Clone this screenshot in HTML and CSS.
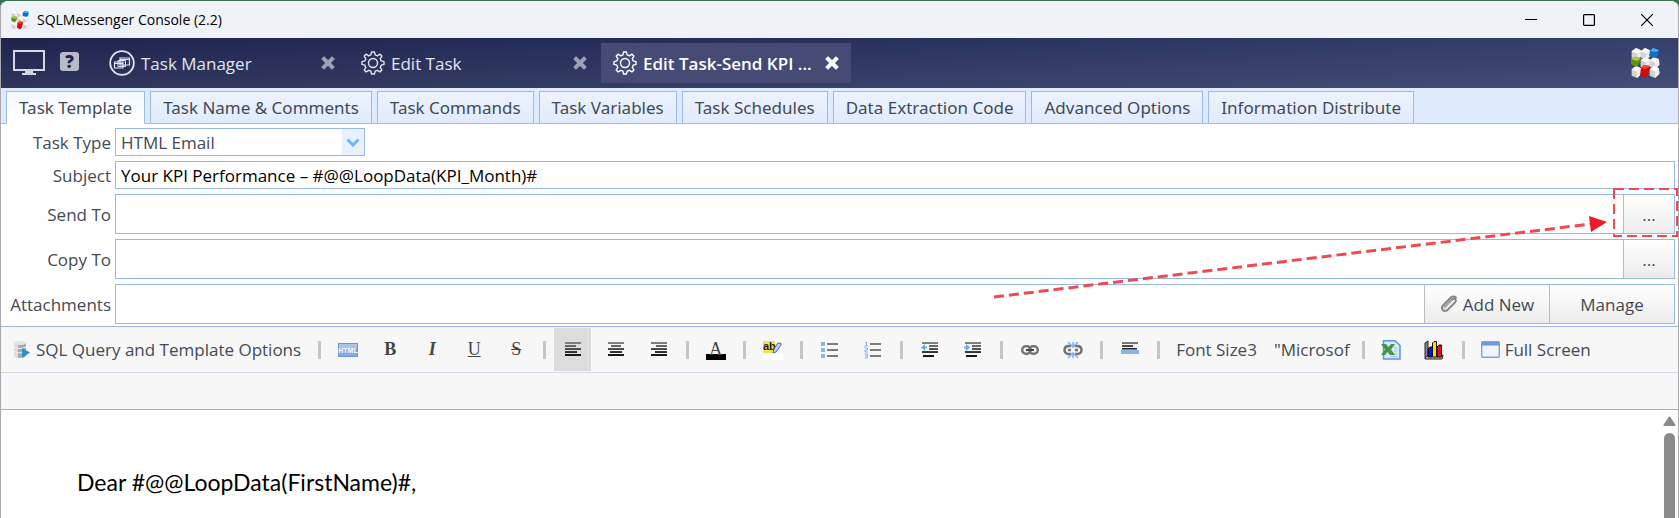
FILE: index.html
```html
<!DOCTYPE html>
<html lang="en">
<head>
    <meta charset="UTF-8">
    <meta name="viewport" content="width=device-width, initial-scale=1.0">
    <title>SQLMessenger Console (2.2)</title>
    <link rel="stylesheet" href="styles.css">
</head>
<body>

<!-- shared shapes -->
<svg class="defs" aria-hidden="true">
    <symbol id="cube-white" viewBox="0 0 10 11">
        <path d="M1 3 L5 0 L9.5 2 L10 7 L6 11 L1 9Z" fill="#d2d2d2"/>
        <path d="M1 3 L5 0 L9.5 2 L6 5Z" fill="#fff"/>
        <path d="M6 5 L9.5 2 L10 7 L6 11Z" fill="#efefef"/>
    </symbol>
    <symbol id="logo" viewBox="0 0 30 32">
        <use href="#cube-white" x="0" y="1" width="12" height="12"/>
        <use href="#cube-white" x="9" y="1" width="12" height="12"/>
        <use href="#cube-white" x="9" y="10" width="12" height="12"/>
        <use href="#cube-white" x="18" y="10" width="12" height="12"/>
        <use href="#cube-white" x="0" y="19" width="12" height="12"/>
        <use href="#cube-white" x="18" y="19" width="12" height="12"/>
        <path d="M20 4 L23 1 L29 3 L28 9 L25 11 L19 9Z" fill="#0d72c4"/>
        <path d="M20 4 L23 1 L29 3 L26 5Z" fill="#45adf5"/>
        <path d="M1 12 L5 10 L11 11 L9 17 L6 20 L1 17Z" fill="#649312"/>
        <path d="M1 12 L5 10 L11 11 L7 14Z" fill="#a5d036"/>
        <path d="M11 21 L14 18 L20 19 L18 28 L15 31 L10 28Z" fill="#d30a0a"/>
        <path d="M11 21 L14 18 L20 19 L16 22Z" fill="#ff3b33"/>
    </symbol>
    <symbol id="gear" viewBox="0 0 24 24">
        <path d="M10.6 1 H13.4 L14.2 3.9 L16.4 4.8 L19 3.2 L20.9 5.1 L19.3 7.7 L20.2 9.9 L23 10.6 V13.4 L20.2 14.2 L19.3 16.4 L20.9 19 L19 20.9 L16.4 19.3 L14.2 20.2 L13.4 23 H10.6 L9.9 20.2 L7.7 19.3 L5.1 20.9 L3.2 19 L4.8 16.4 L3.9 14.2 L1 13.4 V10.6 L3.9 9.9 L4.8 7.7 L3.2 5.1 L5.1 3.2 L7.7 4.8 L9.9 3.9Z" fill="none" stroke="currentColor" stroke-width="1.4" stroke-linejoin="round"/>
        <circle cx="12" cy="12" r="4.5" fill="none" stroke="currentColor" stroke-width="1.4"/>
    </symbol>
    <symbol id="cross" viewBox="0 0 14 14">
        <path d="M3 3 L11 11 M11 3 L3 11" stroke="currentColor" stroke-width="4" stroke-linecap="square"/>
    </symbol>
    <symbol id="chain" viewBox="0 0 18 10">
        <rect x="1.2" y="1.2" width="8.5" height="7.6" rx="3.6" fill="none" stroke="#747474" stroke-width="2.4"/>
        <rect x="8.3" y="1.2" width="8.5" height="7.6" rx="3.6" fill="none" stroke="#747474" stroke-width="2.4"/>
        <path d="M5 5 H13" stroke="#444" stroke-width="2"/>
    </symbol>
    <linearGradient id="line-shade" x1="0" y1="0" x2="0" y2="1">
        <stop offset="0" stop-color="#888"/>
        <stop offset="1" stop-color="#111"/>
    </linearGradient>
</svg>

<div class="window">
    <header class="titlebar">
        <svg class="app-icon" width="20" height="20"><use href="#logo"/></svg>
        <h1>SQLMessenger Console (2.2)</h1>
        <div class="window-buttons">
            <button aria-label="Minimize"><svg width="12" height="12"><path d="M0 5.5 H12" stroke="#000"/></svg></button>
            <button aria-label="Maximize"><svg width="12" height="12"><rect x=".6" y=".6" width="10.8" height="10.8" rx="1" fill="none" stroke="#000" stroke-width="1.2"/></svg></button>
            <button aria-label="Close"><svg width="12" height="12"><path d="M0 0 L12 12 M12 0 L0 12" stroke="#000" stroke-width="1.2"/></svg></button>
        </div>
    </header>

    <nav class="task-bar">
        <button class="nav-icon" aria-label="Desktop">
            <svg width="32" height="26" viewBox="0 0 32 26">
                <rect x="1" y="1" width="30" height="19" fill="none" stroke="#d5d7e2" stroke-width="2"/>
                <path d="M12 20 H20 V23 H23 V25 H9 V23 H12Z" fill="#d5d7e2"/>
            </svg>
        </button>
        <button class="nav-icon help" aria-label="Help">?</button>
        <div class="tasks">
            <div class="task">
                <button class="task-open">
                    <svg width="26" height="26" viewBox="0 0 26 26" fill="none" stroke="currentColor">
                        <circle cx="13" cy="13" r="11.8" stroke-width="1.8"/>
                        <path d="M11 8 H20.5 V15 H11Z M11 9.5 H20.5" stroke-width="1.2"/>
                        <path d="M9 10.500 H16.500 V16.500 H9Z" stroke-width="1"/>
                        <path d="M5.5 12 H14 V18 H5.5Z M5.5 13.5 H14" stroke-width="1.2"/>
                    </svg>
                    Task Manager
                </button>
                <button class="task-close" aria-label="Close Task Manager"><svg width="14" height="14"><use href="#cross"/></svg></button>
            </div>
            <div class="task">
                <button class="task-open"><svg width="24" height="24"><use href="#gear"/></svg>Edit Task</button>
                <button class="task-close" aria-label="Close Edit Task"><svg width="14" height="14"><use href="#cross"/></svg></button>
            </div>
            <div class="task active">
                <button class="task-open"><svg width="24" height="24"><use href="#gear"/></svg>Edit Task-Send KPI ...</button>
                <button class="task-close" aria-label="Close Edit Task-Send KPI"><svg width="14" height="14"><use href="#cross"/></svg></button>
            </div>
        </div>
        <svg class="brand" width="30" height="32"><use href="#logo"/></svg>
    </nav>

    <div class="tabs" role="tablist">
        <button role="tab" aria-selected="true">Task Template</button>
        <button role="tab">Task Name &amp; Comments</button>
        <button role="tab">Task Commands</button>
        <button role="tab">Task Variables</button>
        <button role="tab">Task Schedules</button>
        <button role="tab">Data Extraction Code</button>
        <button role="tab">Advanced Options</button>
        <button role="tab">Information Distribute</button>
    </div>

    <form class="mail-form">
        <div class="row">
            <label for="task-type">Task Type</label>
            <div class="select-box">
                <select id="task-type"><option>HTML Email</option></select>
                <span class="select-arrow"><svg width="14" height="9"><path d="M1.5 1.5 L7 7 L12.5 1.5" fill="none" stroke="#6cb8f5" stroke-width="3"/></svg></span>
            </div>
        </div>
        <div class="row">
            <label for="subject">Subject</label>
            <div class="field"><input id="subject" type="text" value="Your KPI Performance – #@@LoopData(KPI_Month)#"></div>
        </div>
        <div class="row tall">
            <label for="send-to">Send To</label>
            <div class="field">
                <input id="send-to" type="text">
                <button type="button" class="more" aria-label="Choose recipients">...</button>
            </div>
            <svg class="callout" width="690" height="120" viewBox="0 0 690 120">
                <path d="M5 112 L602 39" fill="none" stroke="#ee4a50" stroke-width="3" stroke-dasharray="10 5"/>
                <path d="M600 31 L618 37 L602 47Z" fill="#ed1c24"/>
                <rect x="625" y="4" width="63" height="47" fill="none" stroke="#ee4a50" stroke-width="2" stroke-dasharray="10 5"/>
            </svg>
        </div>
        <div class="row tall">
            <label for="copy-to">Copy To</label>
            <div class="field">
                <input id="copy-to" type="text">
                <button type="button" class="more" aria-label="Choose copy recipients">...</button>
            </div>
        </div>
        <div class="row tall">
            <label for="attachments">Attachments</label>
            <div class="field">
                <input id="attachments" type="text">
                <button type="button" class="wide">
                    <svg width="18" height="18" viewBox="0 0 18 18" fill="none" stroke-linecap="round">
                        <path d="M5 12 L12 4.5 Q14 3 15.3 4.3 Q16.5 6 15 7.5 L7.5 15 Q5 17 2.8 15 Q1 12.7 3 10.5 L10.5 2.8 Q13.5 .5 16 2.5" stroke="#858585" stroke-width="2"/>
                        <path d="M4.5 13 L12 5.5" stroke="#bbb" stroke-width="1.5"/>
                    </svg>
                    Add New
                </button>
                <button type="button" class="wide">Manage</button>
            </div>
        </div>
    </form>

    <div class="toolbar" role="toolbar">
        <button class="text-tool">
            <svg width="18" height="20" viewBox="0 0 18 20">
                <path d="M1 3 V16 Q7 20 13 16 V3Z" fill="#a9a9ad"/>
                <path d="M1 3 V16 Q3 18 5 18 V4Z" fill="#dcdcdf"/>
                <ellipse cx="7" cy="3" rx="6" ry="2.2" fill="#e4e4e6"/>
                <path d="M1 7 Q7 10 13 7 M1 11.5 Q7 14 13 11.5" fill="none" stroke="#eee" stroke-width="1.2"/>
                <path d="M9 8 L17 12.5 L9 18Z" fill="#2795c9"/>
            </svg>
            SQL Query and Template Options
        </button>
        <span class="sep"></span>
        <button aria-label="HTML source">
            <svg width="20" height="14" viewBox="0 0 20 14">
                <rect x=".5" y=".5" width="19" height="13" fill="#86a9e4" stroke="#6d93d8"/>
                <rect x="1" y="1" width="18" height="5" fill="#a9c4ee"/>
                <text class="html-mark" x="10" y="10" text-anchor="middle">HTML</text>
            </svg>
        </button>
        <button class="letter bold" aria-label="Bold">B</button>
        <button class="letter italic" aria-label="Italic">I</button>
        <button class="letter underline" aria-label="Underline">U</button>
        <button class="letter strike" aria-label="Strikethrough">S</button>
        <span class="sep"></span>
        <button class="pressed" aria-label="Align left"><svg width="16" height="15"><path fill="url(#line-shade)" d="M0 0H16V2H0Z M0 3H11V5H0Z M0 6H16V8H0Z M0 9H12V11H0Z M0 12H16V14H0Z"/></svg></button>
        <button aria-label="Align center"><svg width="16" height="15"><path fill="url(#line-shade)" d="M0 0H16V2H0Z M3 3H13V5H3Z M0 6H16V8H0Z M2 9H14V11H2Z M0 12H16V14H0Z"/></svg></button>
        <button aria-label="Align right"><svg width="16" height="15"><path fill="url(#line-shade)" d="M0 0H16V2H0Z M5 3H16V5H5Z M0 6H16V8H0Z M4 9H16V11H4Z M0 12H16V14H0Z"/></svg></button>
        <span class="sep"></span>
        <button class="letter color" aria-label="Text color">A</button>
        <span class="sep"></span>
        <button aria-label="Highlight color">
            <svg width="20" height="20" viewBox="0 0 20 20">
                <rect x="0" y="14" width="20" height="6" fill="#fff"/>
                <rect x="0" y="1" width="12" height="12" fill="#f2e24b"/>
                <text class="ab-mark" x="0" y="10">ab</text>
                <path d="M10 13 L11 9 L15 3 L18 3.5 L18 5 L13 12Z" fill="#c4d2ef" stroke="#4766ab"/>
            </svg>
        </button>
        <span class="sep"></span>
        <button aria-label="Bulleted list">
            <svg width="18" height="18" viewBox="0 0 18 18">
                <path d="M0 1H4V5H0Z M0 7H4V11H0Z M0 13H4V17H0Z" fill="#8db4ea"/>
                <path d="M6 3H17 M6 9H17 M6 15H17" stroke="#555" stroke-width="1.5"/>
            </svg>
        </button>
        <button aria-label="Numbered list">
            <svg width="18" height="18" viewBox="0 0 18 18">
                <path d="M1 1H2.5V5 M.5 5H4 M.5 7H3.5V9H1V11H4 M.5 13H3.5V17H.5 M1 15H3" fill="none" stroke="#8db4ea"/>
                <path d="M6 3H17 M6 9H17 M6 15H17" stroke="#555" stroke-width="1.5"/>
            </svg>
        </button>
        <span class="sep"></span>
        <button aria-label="Outdent">
            <svg width="18" height="16" viewBox="0 0 18 16">
                <path fill="url(#line-shade)" d="M1 0H17V2H1Z M8 3H17V5H8Z M8 6H17V8H8Z M1 9H17V11H1Z M2 13H13V15H2Z"/>
                <path d="M0 5.5 L4 2V4.5H6V6.5H4V9Z" fill="#6fa5ea"/>
            </svg>
        </button>
        <button aria-label="Indent">
            <svg width="18" height="16" viewBox="0 0 18 16">
                <path fill="url(#line-shade)" d="M1 0H17V2H1Z M8 3H17V5H8Z M8 6H17V8H8Z M1 9H17V11H1Z M2 13H13V15H2Z"/>
                <path d="M6 5.5 L2 2V4.5H0V6.5H2V9Z" fill="#6fa5ea"/>
            </svg>
        </button>
        <span class="sep"></span>
        <button aria-label="Insert link"><svg width="18" height="10"><use href="#chain"/></svg></button>
        <button aria-label="Remove link">
            <svg width="20" height="18" viewBox="0 0 20 18">
                <path d="M8 5 H5 Q1.5 5.5 1.5 9 Q1.5 12.5 5 13 H8 M12 5 H15 Q18.5 5.5 18.5 9 Q18.5 12.5 15 13 H12 M5 9 H8 M12 9 H15" fill="none" stroke="#747474" stroke-width="2.4"/>
                <path d="M5 1 L10 6 L15 1 M5 17 L10 12 L15 17 M10 1V6 M10 12V17" fill="none" stroke="#7fb0f0" stroke-width="1.6"/>
            </svg>
        </button>
        <span class="sep"></span>
        <button aria-label="Horizontal line">
            <svg width="18" height="18" viewBox="0 0 18 18">
                <path fill="url(#line-shade)" d="M1 1H17V3H1Z M1 4H12V6H1Z M1 7H16V8.5H1Z"/>
                <rect x="0" y="9" width="18" height="4" fill="#8db4ea"/>
            </svg>
        </button>
        <span class="sep"></span>
        <button class="text-tool">Font Size3</button>
        <button class="text-tool font-name">"Microsof</button>
        <span class="sep"></span>
        <button aria-label="Export to Excel">
            <svg width="20" height="20" viewBox="0 0 20 20">
                <path d="M2.5 .8 H14 L19 5.5 V19 H2.5Z" fill="#d8e9fb" stroke="#5d94dc" stroke-width="1.5"/>
                <path d="M9 14 H16 M9 16.5 H16 M13 8 H16 M13 11 H16" stroke="#9dc3f0"/>
                <path d="M0 4 H5 L7.500 7 L10 4 H14 L10 9.500 L14 15 H9 L6.500 12 L4 15 H0 L4 9.500Z" fill="#43954a"/>
            </svg>
        </button>
        <button aria-label="Insert chart">
            <svg width="20" height="20" viewBox="0 0 20 20">
                <path d="M1 3 L4 1 V15 L1 18Z" fill="#888" stroke="#222"/>
                <path d="M1 18 L4 15 H19 L18 19 H1Z" fill="#bbb" stroke="#222"/>
                <path d="M4 9 L6 7 H8 V17 H4Z" fill="#1111d8" stroke="#111"/>
                <path d="M8.5 3 L10 1.5 H12.5 V17 H8.5Z" fill="#f6e400" stroke="#111"/>
                <path d="M13 7 L15 5 H17.5 V17 H13Z" fill="#e01111" stroke="#111"/>
            </svg>
        </button>
        <span class="sep"></span>
        <button class="text-tool">
            <svg width="19" height="17" viewBox="0 0 19 17">
                <rect x=".7" y=".7" width="17.6" height="15.6" rx="1" fill="#f1f6fd" stroke="#7ba3dd" stroke-width="1.4"/>
                <rect x="1" y="1" width="17" height="3.5" fill="#6b9be0"/>
            </svg>
            Full Screen
        </button>
    </div>
    <div class="toolbar-extra"></div>

    <main class="editor">
        <div class="page" contenteditable="true">Dear #@@LoopData(FirstName)#,</div>
        <div class="scrollbar">
            <svg width="13" height="10"><path d="M1.5 9 L6.5 1.5 L11.5 9Z" fill="#8a8a8a" stroke="#8a8a8a" stroke-width="2" stroke-linejoin="round"/></svg>
            <div class="thumb"></div>
        </div>
    </main>
</div>

</body>
</html>
```

FILE: styles.css
```css
* {
    box-sizing: border-box;
}

body {
    margin: 0;
    background: #3f7350;
    font-family: "Open Sans", "Noto Sans", sans-serif;
    font-size: 17px;
    color: #434a54;
}

button, input, select {
    font: inherit;
    color: inherit;
    margin: 0;
    padding: 0;
    border: none;
    border-radius: 0;
    background: none;
}

svg {
    display: block;
    flex: none;
}

.defs {
    position: absolute;
    width: 0;
    height: 0;
}

.window {
    display: flex;
    flex-direction: column;
    height: 100vh;
    border: 1px solid #a9a9ad;
    border-top-color: #3f7350;
    border-bottom: none;
    border-radius: 8px 8px 0 0;
    background: #fff;
    overflow: hidden;
}

/* title bar */
.titlebar {
    display: flex;
    align-items: center;
    flex: none;
    height: 37px;
    padding: 0 2px 0 9px;
    background: #eff3f9;
    color: #000;
}

.titlebar h1 {
    margin: 0 0 0 7px;
    font-size: 14px;
    font-weight: normal;
}

.window-buttons {
    display: flex;
    margin-left: auto;
}

.window-buttons button {
    display: flex;
    align-items: center;
    justify-content: center;
    width: 58px;
    height: 37px;
}

/* dark bar with the open tasks */
.task-bar {
    display: flex;
    align-items: center;
    flex: none;
    height: 50px;
    padding: 0 18px 0 12px;
    background: linear-gradient(rgba(255, 255, 255, 0), rgba(255, 255, 255, 0.08)), linear-gradient(90deg, #1f244f, #232d58 35%, #343f6b);
    color: #e3e5ee;
}

.help {
    width: 19px;
    height: 19px;
    margin: 0 18px 4px 15px;
    border-radius: 3px;
    background: #b9bac8;
    color: #20254f;
    font-size: 17px;
    font-weight: 800;
    line-height: 19px;
}

.tasks {
    display: flex;
    gap: 2px;
}

.task {
    display: flex;
    align-items: center;
    width: 250px;
    height: 40px;
    padding: 0 12px;
}

.task-open {
    display: flex;
    align-items: center;
    gap: 6px;
    flex: 1;
    text-align: left;
    white-space: nowrap;
}

.task-close {
    color: #9ba0b5;
}

.task.active {
    background: #454b74;
    color: #fff;
    font-weight: 600;
}

.task.active .task-close {
    color: #fff;
}

.brand {
    margin-left: auto;
}

/* tabs */
.tabs {
    display: flex;
    align-items: flex-end;
    gap: 5px;
    flex: none;
    height: 36px;
    padding-left: 5px;
    border-bottom: 1px solid #99bbe8;
    background: #deebfe;
    font-family: "Noto Sans", sans-serif;
}

.tabs button {
    height: 33px;
    margin-bottom: -1px;
    padding: 0 12px;
    border: 1px solid #99bbe8;
    background: linear-gradient(#edf3fe, #e0ebfd);
    white-space: nowrap;
}

.tabs button[aria-selected="true"] {
    border-bottom-color: #fff;
    background: linear-gradient(#f4f8ff, #fff);
}

/* mail fields */
.mail-form {
    display: flex;
    flex-direction: column;
    gap: 5px;
    flex: none;
    padding: 4px 3px 2px 0;
}

.row {
    display: flex;
    align-items: center;
    gap: 4px;
    position: relative;
    height: 28px;
}

.row.tall {
    height: 40px;
}

.row label {
    width: 110px;
    text-align: right;
    white-space: nowrap;
}

.field {
    display: flex;
    flex: 1;
    height: 100%;
    border: 1px solid #99b8e6;
}

.field input {
    flex: 1;
    min-width: 0;
    padding: 0 5px;
    color: #000;
    outline: none;
}

.field button {
    display: flex;
    align-items: center;
    justify-content: center;
    gap: 5px;
    border-left: 1px solid #bbb;
    background: linear-gradient(#fff, #ececec);
}

.field .more {
    width: 51px;
}

.field .wide {
    width: 125px;
}

.select-box {
    position: relative;
    width: 250px;
    height: 28px;
    border: 1px solid #99b8e6;
}

.select-box select {
    width: 100%;
    height: 100%;
    padding: 0 28px 0 5px;
    appearance: none;
}

.select-arrow {
    position: absolute;
    top: 0;
    right: 0;
    bottom: 0;
    display: flex;
    align-items: center;
    justify-content: center;
    width: 22px;
    background: #e8f2fe;
    pointer-events: none;
}

/* dashed arrow pointing at the recipients button */
.callout {
    position: absolute;
    top: -9px;
    right: -4px;
    z-index: 1;
    pointer-events: none;
}

/* editor toolbar */
.toolbar {
    display: flex;
    align-items: center;
    gap: 6px;
    flex: none;
    height: 47px;
    padding: 0 4px;
    border-top: 1px solid #99b8e6;
    border-bottom: 1px solid #d3dceb;
    background: #f7f7f7;
}

.toolbar button {
    display: flex;
    align-items: center;
    justify-content: center;
    width: 37px;
    height: 43px;
}

.toolbar .text-tool {
    gap: 5px;
    width: auto;
    padding: 0 8px;
    white-space: nowrap;
}

.toolbar .font-name {
    padding: 0 3px;
}

.toolbar .pressed {
    background: #dcdcdc;
}

.sep {
    flex: none;
    width: 3px;
    height: 18px;
    margin: 0 2px 0 3px;
    background: #c6c6c6;
}

.toolbar .letter {
    width: 36px;
    font-family: "Liberation Serif", serif;
    font-size: 18px;
    color: #444;
}

.toolbar .bold {
    font-weight: bold;
}

.toolbar .italic {
    font-weight: bold;
    font-style: italic;
}

.toolbar .underline {
    text-decoration: underline;
}

.toolbar .strike {
    text-decoration: line-through;
}

.toolbar .color {
    width: 37px;
    background: linear-gradient(#000, #000) center 26px / 20px 6px no-repeat;
}

.html-mark {
    font: bold 7px "Liberation Sans", sans-serif;
    fill: #fff;
}

.ab-mark {
    font: bold 11px "Liberation Sans", sans-serif;
    fill: #222;
}

.toolbar-extra {
    flex: none;
    height: 37px;
    border-bottom: 1px solid #99b4e1;
    background: #f7f7f7;
}

/* message body */
.editor {
    display: flex;
    flex: 1;
    min-height: 0;
}

.page {
    flex: 1;
    padding: 56px 76px 0;
    color: #000;
    font-family: Lato, "Open Sans", sans-serif;
    font-size: 23px;
    line-height: 32px;
    outline: none;
}

.scrollbar {
    display: flex;
    flex-direction: column;
    align-items: center;
    gap: 7px;
    width: 18px;
    padding-top: 6px;
    background: #fcfcfc;
}

.thumb {
    flex: 1;
    width: 11px;
    border-radius: 6px 6px 0 0;
    background: #8a8a8a;
}
```
